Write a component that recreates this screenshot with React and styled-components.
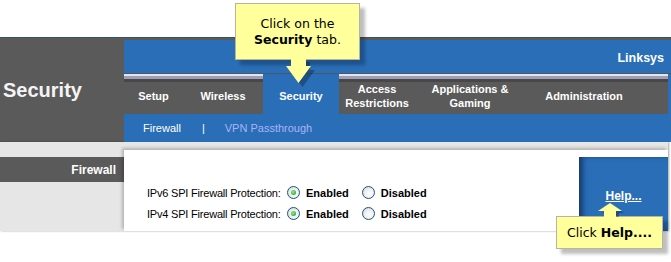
import React from "react";
import styled, { createGlobalStyle } from "styled-components";

const BLUE = "#296eb7";
const GRAY = "#5a5a5a";

const Global = createGlobalStyle`
  html, body { margin: 0; padding: 0; background: #fff; }
  body { font-family: "Liberation Sans", Arial, sans-serif; }
`;

const Page = styled.div`
  position: relative;
  width: 671px;
  height: 262px;
  overflow: visible;
`;

const TopGap = styled.div`
  height: 37px;
`;

const Header = styled.header`
  display: grid;
  grid-template-columns: 124px 1fr;
  background: ${GRAY};
  border-top: 1px solid #33506e;
`;

const Title = styled.h1`
  margin: 0;
  display: flex;
  align-items: center;
  padding-left: 3px;
  font-size: 20px;
  font-weight: bold;
  color: #f4f4f4;
`;

const RightCol = styled.div`
  padding-top: 2px;
  display: flex;
  flex-direction: column;
`;

const BrandBar = styled.div`
  height: 34px;
  box-sizing: border-box;
  background: ${BLUE};
  border-bottom: 1px solid #4d5662;
  display: flex;
  align-items: center;
  justify-content: flex-end;
  padding: 3px 7px 0 0;
  color: #fff;
  font-weight: bold;
  font-size: 12.5px;
`;

const TabRow = styled.nav`
  display: flex;
  height: 40px;
  background: ${BLUE};
  padding-right: 3px;
`;

const Tab = styled.div`
  width: ${(p) => (p.$w ? `${p.$w}px` : "auto")};
  flex: ${(p) => (p.$w ? "none" : "1")};
  box-sizing: border-box;
  padding-top: 4px;
  display: flex;
  align-items: center;
  justify-content: center;
  text-align: center;
  color: #fff;
  font-weight: bold;
  font-size: 11px;
  line-height: 14px;
  background: ${(p) =>
    p.$active
      ? BLUE
      : `linear-gradient(to bottom, #e4e4ec 0 2px, #a09eb6 2px 5px, #474747 5px 8px, ${GRAY} 8px)`};
`;

const SubNav = styled.div`
  height: 28px;
  display: flex;
  align-items: center;
  background: ${BLUE};
  padding-left: 19px;
  font-size: 11px;
  color: #fff;
`;

const SubItem = styled.span`
  color: ${(p) => (p.$dim ? "#aab4f5" : "#fff")};
  margin-right: ${(p) => p.$mr || 0}px;
`;

const Body = styled.section`
  display: grid;
  grid-template-columns: 124px 1fr;
  width: 668px;
  height: 89px;
  box-sizing: border-box;
  padding-top: 8px;
  background: #e6e6e6;
  box-shadow: 1px 0 2px rgba(0, 0, 0, 0.35);
`;

const SideCol = styled.div``;

const SideBar = styled.div`
  margin-top: 7px;
  height: 25px;
  background: ${GRAY};
  color: #fff;
  font-weight: bold;
  font-size: 12px;
  display: flex;
  align-items: center;
  justify-content: flex-end;
  padding-right: 8px;
`;

const Panel = styled.div`
  background: #fff;
  display: grid;
  grid-template-columns: 1fr 89px;
  box-shadow: -2px -2px 3px rgba(0, 0, 0, 0.22);
`;

const Form = styled.div`
  padding: 32px 0 0 23px;
`;

const Row = styled.div`
  display: flex;
  align-items: center;
  height: 21px;
`;

const Label = styled.span`
  width: 140px;
  font-size: 11px;
  letter-spacing: -0.2px;
  color: #000;
`;

const Option = styled.label`
  display: flex;
  align-items: center;
  gap: 6px;
  margin-right: ${(p) => p.$mr || 0}px;
  font-size: 11px;
  font-weight: bold;
  color: #000;
`;

const Radio = styled.span`
  position: relative;
  width: 13px;
  height: 13px;
  box-sizing: border-box;
  border-radius: 50%;
  border: 1px solid #1d5283;
  background: radial-gradient(circle at 60% 60%, #ffffff 0%, #f0f0f0 45%, #cfcfcf 100%);
  &::after {
    content: "";
    display: ${(p) => (p.$checked ? "block" : "none")};
    position: absolute;
    left: 3px;
    top: 3px;
    width: 5px;
    height: 5px;
    border-radius: 50%;
    background: radial-gradient(circle at 40% 40%, #8ff08f 0%, #2db42d 70%, #1f8f1f 100%);
  }
`;

const HelpPanel = styled.div`
  margin-top: 7px;
  background: ${BLUE};
  box-shadow: inset 5px 0 5px -1px rgba(0, 0, 30, 0.45);
  padding-top: 29px;
  text-align: center;
`;

const HelpLink = styled.a`
  color: #fff;
  font-weight: bold;
  font-size: 12px;
  text-decoration: underline;
`;

const Callout = styled.div`
  position: absolute;
  left: ${(p) => p.$x}px;
  top: ${(p) => p.$y}px;
  z-index: 5;
`;

const CalloutBox = styled.div`
  position: relative;
  width: ${(p) => p.$w}px;
  height: ${(p) => p.$h}px;
  box-sizing: border-box;
  background: #ffff9c;
  border: 1px solid #b4b4a0;
  box-shadow: 5px 5px 3px rgba(0, 0, 0, 0.25);
  display: flex;
  flex-direction: column;
  align-items: center;
  justify-content: center;
  font-family: "DejaVu Sans", Verdana, sans-serif;
  font-size: 12.5px;
  line-height: 16px;
  color: #000;
  text-align: center;
`;

const ArrowSvg = styled.svg`
  position: absolute;
  left: ${(p) => p.$x}px;
  top: ${(p) => p.$y}px;
  z-index: 6;
  overflow: visible;
`;

export default function App() {
  return (
    <>
      <Global />
      <Page>
        <TopGap />
        <Header>
          <Title>Security</Title>
          <RightCol>
            <BrandBar>Linksys</BrandBar>
            <TabRow>
              <Tab $w={59}>Setup</Tab>
              <Tab $w={80}>Wireless</Tab>
              <Tab $w={76} $active>Security</Tab>
              <Tab $w={76}>
                Access
                <br />
                Restrictions
              </Tab>
              <Tab $w={110}>
                Applications &amp;
                <br />
                Gaming
              </Tab>
              <Tab $w={118}>Administration</Tab>
              <Tab />
            </TabRow>
            <SubNav>
              <SubItem $mr={21}>Firewall</SubItem>
              <SubItem $mr={20}>|</SubItem>
              <SubItem $dim>VPN Passthrough</SubItem>
            </SubNav>
          </RightCol>
        </Header>
        <Body>
          <SideCol>
            <SideBar>Firewall</SideBar>
          </SideCol>
          <Panel>
            <Form>
              <Row>
                <Label>IPv6 SPI Firewall Protection:</Label>
                <Option $mr={13}>
                  <Radio $checked />
                  Enabled
                </Option>
                <Option>
                  <Radio />
                  Disabled
                </Option>
              </Row>
              <Row>
                <Label>IPv4 SPI Firewall Protection:</Label>
                <Option $mr={13}>
                  <Radio $checked />
                  Enabled
                </Option>
                <Option>
                  <Radio />
                  Disabled
                </Option>
              </Row>
            </Form>
            <HelpPanel>
              <HelpLink>Help...</HelpLink>
            </HelpPanel>
          </Panel>
        </Body>

        <Callout $x={235} $y={3}>
          <CalloutBox $w={125} $h={57}>
            <div>Click on the</div>
            <div>
              <b>Security</b> tab.
            </div>
          </CalloutBox>
          <ArrowSvg $x={48} $y={55} width="32" height="30" viewBox="0 0 32 30">
            <polygon
              points="12,4 27,4 27,12 32,12 19.5,29 7,12 12,12"
              fill="rgba(0,0,0,0.28)"
            />
            <polygon points="8,0 23,0 23,8 28,8 15.5,25 3,8 8,8" fill="#ffff9c" />
          </ArrowSvg>
        </Callout>

        <Callout $x={556} $y={216}>
          <CalloutBox $w={107} $h={33}>
            <div>
              Click <b>Help....</b>
            </div>
          </CalloutBox>
          <ArrowSvg $x={40} $y={-13} width="30" height="16" viewBox="0 0 30 16">
            <polygon
              points="17,3 28,10 23,10 23,14 11,14 11,10 6,10"
              fill="rgba(0,0,0,0.28)"
            />
            <polygon points="14,0 26,8 20,8 20,15 8,15 8,8 2,8" fill="#ffff9c" />
          </ArrowSvg>
        </Callout>
      </Page>
    </>
  );
}
